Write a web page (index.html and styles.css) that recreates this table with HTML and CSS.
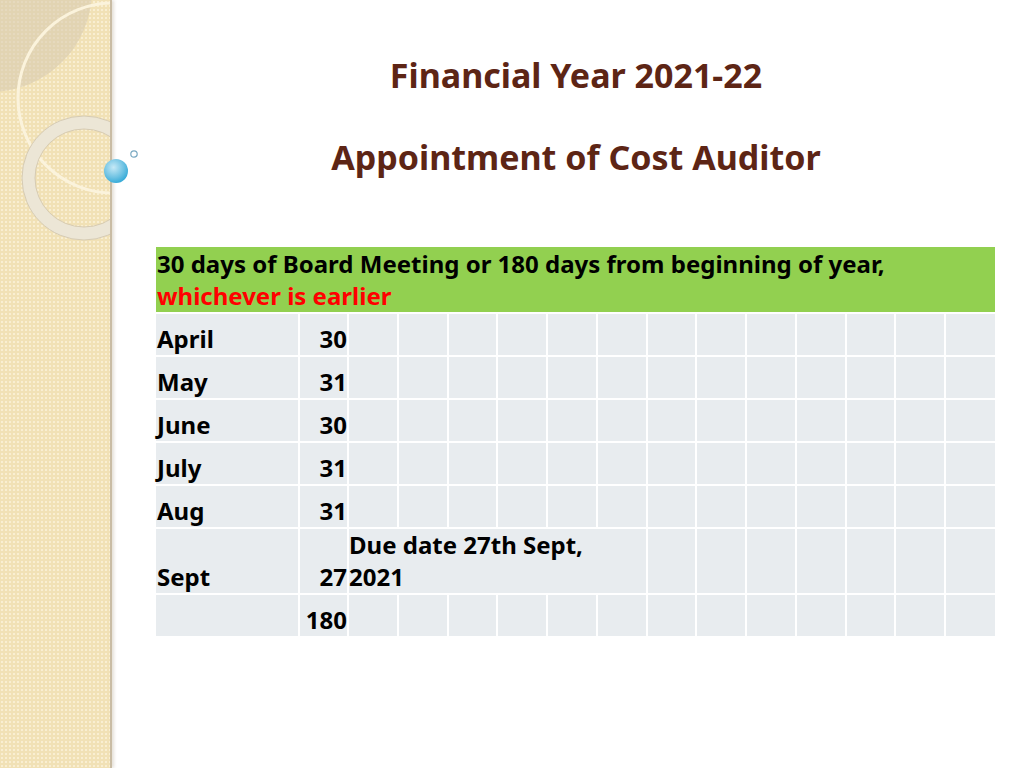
FILE: index.html
```html
<!DOCTYPE html>
<html>
<head>
<meta charset="utf-8">
<link rel="stylesheet" href="styles.css">
</head>
<body>
<div class="slide">
  <aside class="strip">
    <div class="deco-clip">
      <svg class="deco" width="110" height="260" viewBox="0 0 110 260">
        <circle cx="-10" cy="-10" r="102" fill="#d8cbb0" opacity="0.6"/>
        <circle cx="113" cy="98" r="95" fill="none" stroke="#fbf3dc" stroke-width="3"/>
        <circle cx="84" cy="178" r="55.5" fill="none" stroke="#ece6d6" stroke-width="13"/>
        <circle cx="84" cy="178" r="62" fill="none" stroke="#d6cbb3" stroke-width="1"/>
        <circle cx="84" cy="178" r="49" fill="none" stroke="#d6cbb3" stroke-width="1"/>
      </svg>
    </div>
    <svg class="ball" width="40" height="40" viewBox="0 0 40 40">
      <defs>
        <radialGradient id="ballg" cx="0.4" cy="0.35" r="0.7">
          <stop offset="0" stop-color="#c6e9f6"/>
          <stop offset="0.6" stop-color="#6fc3e3"/>
          <stop offset="1" stop-color="#2ea7d6"/>
        </radialGradient>
      </defs>
      <circle cx="14" cy="22" r="12" fill="url(#ballg)"/>
      <circle cx="32" cy="5" r="3.2" fill="none" stroke="#7aa9c2" stroke-width="1.2"/>
    </svg>
  </aside>
  <main class="content">
    <header class="titles">
      <h1 class="title">Financial Year 2021-22</h1>
      <h2 class="title">Appointment of Cost Auditor</h2>
    </header>
    <table class="grid">
      <colgroup>
        <col class="c-month"><col class="c-days">
        <col><col><col><col><col><col><col><col><col><col><col><col><col>
      </colgroup>
      <tr class="head">
        <td colspan="15">30 days of Board Meeting or 180 days from beginning of year,<br><span class="red">whichever is earlier</span></td>
      </tr>
      <tr><td>April</td><td class="num">30</td><td></td><td></td><td></td><td></td><td></td><td></td><td></td><td></td><td></td><td></td><td></td><td></td><td></td></tr>
      <tr><td>May</td><td class="num">31</td><td></td><td></td><td></td><td></td><td></td><td></td><td></td><td></td><td></td><td></td><td></td><td></td><td></td></tr>
      <tr><td>June</td><td class="num">30</td><td></td><td></td><td></td><td></td><td></td><td></td><td></td><td></td><td></td><td></td><td></td><td></td><td></td></tr>
      <tr><td>July</td><td class="num">31</td><td></td><td></td><td></td><td></td><td></td><td></td><td></td><td></td><td></td><td></td><td></td><td></td><td></td></tr>
      <tr><td>Aug</td><td class="num">31</td><td></td><td></td><td></td><td></td><td></td><td></td><td></td><td></td><td></td><td></td><td></td><td></td><td></td></tr>
      <tr class="tall"><td>Sept</td><td class="num">27</td><td colspan="6" class="due">Due date 27th Sept,<br>2021</td><td></td><td></td><td></td><td></td><td></td><td></td><td></td></tr>
      <tr><td></td><td class="num">180</td><td></td><td></td><td></td><td></td><td></td><td></td><td></td><td></td><td></td><td></td><td></td><td></td><td></td></tr>
    </table>
  </main>
</div>
</body>
</html>
```

FILE: styles.css
```css
html, body {
  margin: 0;
  padding: 0;
  background: #ffffff;
}
.slide {
  display: flex;
  width: 1024px;
  height: 768px;
  overflow: hidden;
  font-family: "Noto Sans", "Open Sans", sans-serif;
}
.strip {
  position: relative;
  flex: 0 0 110px;
  height: 768px;
  background-color: #f1e1b5;
  background-image: radial-gradient(circle, rgba(255, 250, 232, 0.55) 1px, transparent 1.6px);
  background-size: 4px 4px;
  border-right: 2px solid #c9bca4;
  box-shadow: 2px 0 3px rgba(150, 130, 100, 0.25);
  z-index: 1;
}
.deco-clip {
  position: absolute;
  left: 0;
  top: 0;
  right: 0;
  bottom: 0;
  overflow: hidden;
}
.deco {
  display: block;
}
.ball {
  position: absolute;
  left: 102px;
  top: 149px;
  overflow: visible;
}
.content {
  flex: 1;
  padding-left: 44px;
}
.titles {
  padding-right: 28px;
  text-align: center;
  color: #5d2515;
}
.title {
  margin: 0;
  font-size: 34px;
  font-weight: 700;
  line-height: 44px;
}
h1.title {
  padding-top: 53px;
}
h2.title {
  padding-top: 38px;
}
.grid {
  margin-top: 68px;
  width: 839px;
  table-layout: fixed;
  border-collapse: collapse;
  font-size: 24px;
  font-weight: 700;
  line-height: 32px;
  color: #000;
}
.c-month { width: 143px; }
.c-days { width: 49px; }
.grid td {
  background: #e8ecef;
  border: 2px solid #ffffff;
  padding: 0 0 0 1px;
  height: 41px;
  vertical-align: bottom;
  white-space: nowrap;
}
.grid tr:first-child td { border-top: 0; }
.grid td:first-child { border-left: 0; }
.grid td:last-child { border-right: 0; }
.grid tr:last-child td { border-bottom: 0; }
.grid td.num {
  text-align: right;
  padding: 0;
}
.grid td.due {
  padding-left: 0;
}
.grid tr.head td {
  background: #92d050;
  height: 65px;
  padding: 0 0 0 1px;
}
.grid tr.tall td {
  height: 64px;
}
.red {
  color: #ff0000;
}
```
